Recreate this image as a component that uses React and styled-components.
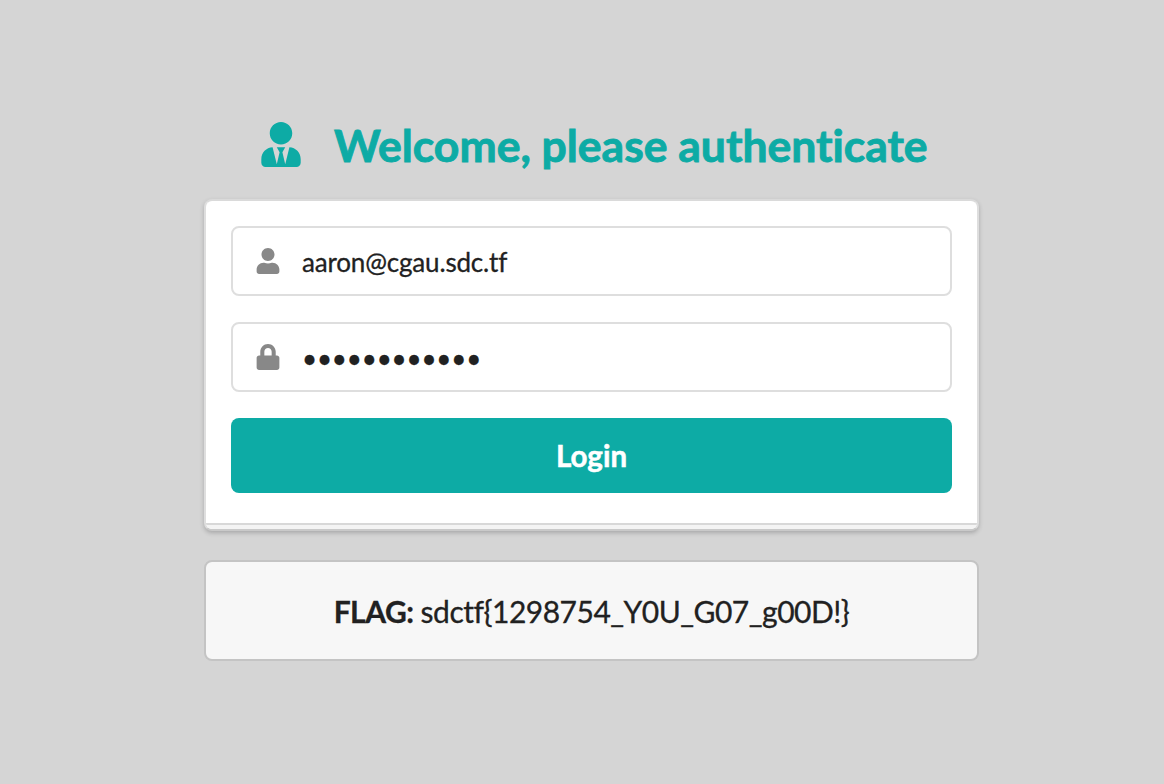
import React from 'react';
import styled, { createGlobalStyle } from 'styled-components';
import { FaUserTie, FaUser, FaLock } from 'react-icons/fa';

const Global = createGlobalStyle`
  *, *::before, *::after { box-sizing: border-box; }
  body {
    margin: 0;
    background: #d5d5d5;
    color: #212121;
    font-family: Lato, "Liberation Sans", sans-serif;
    font-variant-ligatures: none;
  }
`;
const Page = styled.main`
  width: 775px;
  height: 784px;
  margin-left: 204px;
  padding-top: 114px;
`;
const Title = styled.h1`
  display: flex;
  align-items: center;
  height: 62px;
  margin: 0 0 23px;
  padding-left: 54px;
  color: #0daba5;
  font-size: 44.5px;
  font-weight: 700;
  letter-spacing: -0.02px;
  line-height: 62px;
  white-space: nowrap;
  -webkit-text-stroke: 0.9px #0daba5;
  svg { width: 46px; height: 45px; margin: 0 30px 1px 0; stroke: none; }
`;
const Card = styled.form`
  display: flex;
  flex-direction: column;
  height: 332px;
  overflow: hidden;
  background: #fff;
  border: 2px solid #dedede;
  border-top-color: #dadada;
  border-bottom-color: #c9c9c9;
  border-radius: 8px;
  box-shadow: 0 2px 4px rgba(34, 36, 38, 0.25);
`;
const Fields = styled.div`
  flex: 1;
  padding: 25px 25px 0;
`;
const Stack = styled.div`
  height: 6px;
  border-top: 2px solid #d8d8d8;
  background: #f4f4f4;
`;
const Field = styled.label`
  display: flex;
  align-items: center;
  height: 70px;
  margin-bottom: 26px;
  padding-left: 22px;
  border: 2px solid #dedede;
  border-radius: 8px;
  color: #888;
`;
const Input = styled.input`
  width: 600px;
  margin-left: 21px;
  padding: 2px 0 0;
  border: 0;
  outline: 0;
  background: transparent;
  color: #212121;
  font: 400 26px Lato, sans-serif;
  font-variant-ligatures: none;
  letter-spacing: ${(p) => (p.type === 'password' ? '-0.15px' : '-0.17px')};
  -webkit-text-stroke: 0.3px #212121;
`;
const Button = styled.button`
  display: block;
  width: 100%;
  height: 75px;
  padding: 0;
  border: 0;
  border-radius: 8px;
  background: #0daba5;
  color: #fff;
  font: 700 29.5px/75px Lato, sans-serif;
  -webkit-text-stroke: 0.5px #fff;
`;
const Flag = styled.div`
  display: flex;
  align-items: center;
  justify-content: center;
  height: 101px;
  margin-top: 29px;
  background: #f7f7f7;
  border: 2px solid #c4c4c4;
  border-radius: 8px;
  font-size: 30px;
  letter-spacing: -0.5px;
  white-space: pre;
  -webkit-text-stroke: 0.3px #212121;
`;
export default function App() {
  return (
    <Page>
      <Global />
      <Title><FaUserTie />Welcome, please authenticate</Title>
      <Card>
        <Fields>
          <Field><FaUser size={26} /><Input defaultValue="aaron@cgau.sdc.tf" /></Field>
          <Field><FaLock size={26} /><Input type="password" defaultValue="passwordpass" /></Field>
          <Button type="button">Login</Button>
        </Fields>
        <Stack />
      </Card>
      <Flag><b>FLAG:</b> sdctf{'{'}1298754_Y0U_G07_g00D!{'}'}</Flag>
    </Page>
  );
}
